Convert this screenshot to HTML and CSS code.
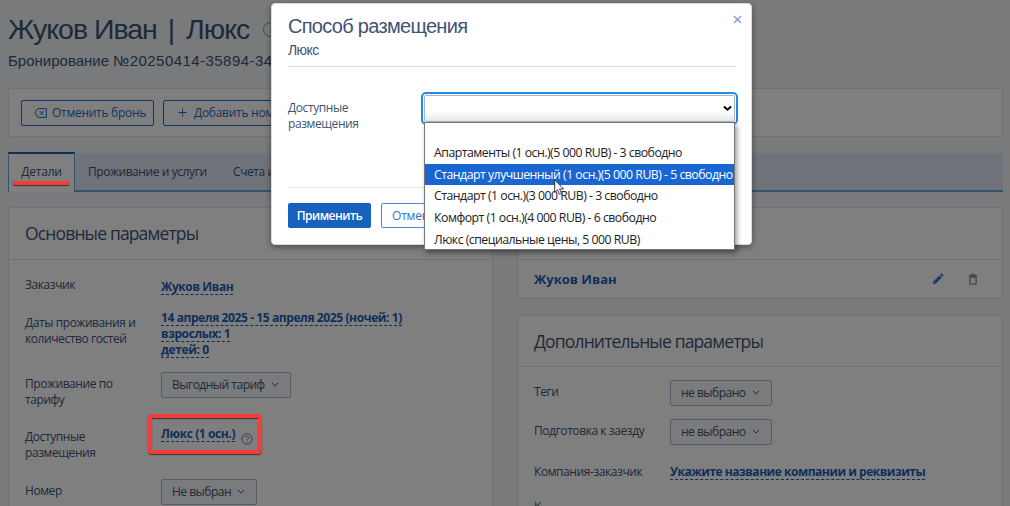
FILE: index.html
```html
<!DOCTYPE html>
<html lang="ru">
<head>
<meta charset="utf-8">
<title>Жуков Иван | Люкс</title>
<link rel="stylesheet" href="styles.css">
</head>
<body>
<main class="page">
  <header class="head">
    <h1 class="title"><span class="title-text">Жуков Иван <span class="pipe">|</span> Люкс</span><span class="status"></span></h1>
    <p class="booking">Бронирование <span class="number">№20250414-35894-34</span></p>
  </header>
  <section class="card toolbar">
    <button class="btn btn-cancel"><svg width="13" height="10" viewBox="0 0 13 10"><path d="M4 .6h8.4v8.8H4L.8 5zM5.7 3l4 4M9.7 3l-4 4"/></svg><span class="cancel-text">Отменить бронь</span></button>
    <button class="btn btn-add"><svg width="9" height="9" viewBox="0 0 9 9"><path d="M4.5.5v8M.5 4.5h8"/></svg><span class="add-text">Добавить ном</span></button>
  </section>
  <nav class="tabs">
    <a class="tab active">Детали</a>
    <a class="tab stay">Проживание и услуги</a>
    <a class="tab bills">Счета и</a>
  </nav>
  <div class="columns">
    <section class="card main-card">
      <h2 class="card-title">Основные параметры</h2>
      <div class="row r-customer"><div class="label">Заказчик</div><div class="value"><a class="edit">Жуков Иван</a></div></div>
      <div class="row r-dates"><div class="label">Даты проживания и количество гостей</div><div class="value"><a class="edit">14 апреля 2025 - 15 апреля 2025 (ночей: 1)</a><br><a class="edit">взрослых: 1</a><br><a class="edit">детей: 0</a></div></div>
      <div class="row r-rate"><div class="label">Проживание по<br>тарифу</div><div class="value"><span class="drop drop-rate">Выгодный тариф<svg width="8" height="6" viewBox="0 0 8 6"><path d="M1 1l3 3 3-3"/></svg></span></div></div>
      <div class="row r-place"><div class="label">Доступные<br>размещения</div><div class="value"><a class="edit">Люкс (1 осн.)</a><svg class="help" width="12" height="12" viewBox="0 0 12 12"><circle cx="6" cy="6" r="5.2"/><path d="M4.3 4.8c0-2.2 3.4-2.2 3.4 0C7.7 6 6 6 6 7.2M6 8.3v1"/></svg></div></div>
      <div class="row r-room"><div class="label">Номер</div><div class="value"><span class="drop drop-room">Не выбран<svg width="8" height="6" viewBox="0 0 8 6"><path d="M1 1l3 3 3-3"/></svg></span></div></div>
    </section>
    <div class="side">
      <section class="card guests">
        <h2 class="card-title"></h2>
        <div class="guest"><span class="guest-name">Жуков Иван</span>
          <svg class="pencil" width="12" height="12" viewBox="0 0 12 12"><path d="M1.1 10.9l.5-2.7 6-6 2.2 2.2-6 6zM8.2 1.6L9 .8q.5-.4 1 0l1.2 1.2q.4.5 0 1l-.8.8z" fill="#1b62c0"/><path d="M2.2 8.7l5.5-5.5M2.5 9.7l5.5-5.5" stroke="#80b0ec" stroke-width=".5"/></svg>
          <svg class="trash" width="10" height="11" viewBox="0 0 10 11"><path d="M.8 1.7h8.4M3.3 1V.6h3.4V1M1.9 3h6.2v7.2H1.9z"/></svg>
        </div>
      </section>
      <section class="card extra">
        <h2 class="card-title">Дополнительные параметры</h2>
        <div class="row r-tags"><div class="label">Теги</div><div class="value"><span class="drop">не выбрано<svg width="8" height="6" viewBox="0 0 8 6"><path d="M1 1l3 3 3-3"/></svg></span></div></div>
        <div class="row r-prep"><div class="label">Подготовка к заезду</div><div class="value"><span class="drop">не выбрано<svg width="8" height="6" viewBox="0 0 8 6"><path d="M1 1l3 3 3-3"/></svg></span></div></div>
        <div class="row r-company"><div class="label">Компания-заказчик</div><div class="value"><a class="edit">Укажите название компании и реквизиты</a></div></div>
        <div class="row r-contact"><div class="label">К</div></div>
      </section>
    </div>
  </div>
</main>
<div class="overlay"></div>
<div class="mark-line"></div>
<div class="mark-box"></div>
<div class="modal">
  <svg class="close" width="9" height="9" viewBox="0 0 9 9"><path d="M1 1l7 7M8 1L1 8"/></svg>
  <div class="modal-head"><h3 class="modal-title">Способ размещения</h3><p class="modal-sub">Люкс</p></div>
  <div class="modal-body"><div class="modal-label">Доступные размещения</div><div class="select"><svg width="9" height="7" viewBox="0 0 9 7"><path d="M1 1.4l3.5 3.3L8 1.4"/></svg></div></div>
  <div class="modal-foot"><button class="apply">Применить</button><button class="dismiss">Отмен</button></div>
</div>
<div class="menu">
  <div class="option"><span>Апартаменты (1 осн.)(5 000 RUB) - 3 свободно</span></div>
  <div class="option selected"><span>Стандарт улучшенный (1 осн.)(5 000 RUB) - 5 свободно</span></div>
  <div class="option"><span>Стандарт (1 осн.)(3 000 RUB) - 3 свободно</span></div>
  <div class="option"><span>Комфорт (1 осн.)(4 000 RUB) - 6 свободно</span></div>
  <div class="option"><span>Люкс (специальные цены, 5 000 RUB)</span></div>
</div>
<svg class="cursor" width="11" height="17" viewBox="0 0 11 17"><path d="M.7.8v12.6l2.8-2.6 2 4.6 2.1-.9-2-4.5h4z" fill="#fff" stroke="#223" stroke-width=".9"/></svg>
</body>
</html>
```
FILE: styles.css
```css
* { box-sizing: border-box; }
body { margin: 0; width: 1010px; height: 506px; overflow: hidden; position: relative; background: #f0f4f8; color: #3f5372; font: 12px/16px "Open Sans", "Noto Sans", sans-serif; letter-spacing: -.42px; }
h1, h2, h3, p { margin: 0; font-weight: 400; }
svg { fill: none; stroke: currentColor; flex: none; }
button { font: inherit; letter-spacing: inherit; padding: 0; margin: 0; }
.page { padding: 0 7px 0 8px; height: 506px; overflow: hidden; }
.head { height: 88px; padding-top: 10px; white-space: nowrap; }
.title { display: flex; align-items: center; height: 38px; font: 28.5px/38px "Liberation Sans", Arial, sans-serif; letter-spacing: -1px; }
.title-text { width: 255px; }
.pipe { padding: 0 5px 0 4px; }
.status { width: 40px; height: 15px; border: 1px solid #55b866; border-radius: 8px; }
.booking { font: 15px/20px "Liberation Sans", Arial, sans-serif; letter-spacing: 0; padding-top: 3px; }
.number { letter-spacing: .45px; }
.card { background: #fff; border: 1px solid #dce3ee; border-radius: 3px; }
.toolbar { height: 49px; padding: 11px 12px; display: flex; gap: 9px; }
.btn { height: 26px; display: flex; align-items: center; background: #fff; border: 1px solid #1f6fd0; border-radius: 2px; color: #1f6bc0; white-space: nowrap; letter-spacing: -.28px; padding-bottom: 1px; }
.btn-cancel { width: 133px; padding-left: 12px; gap: 5px; }
.btn-add { width: 140px; padding-left: 14px; gap: 7px; }
.tabs { display: flex; margin-top: 15px; height: 40px; background: linear-gradient(#e0e6f2, #e0e6f2) 0 1px / 100% 37px no-repeat; border-bottom: 2px solid #69a9dc; }
.tab { padding-top: 12px; white-space: nowrap; }
.active { width: 67px; height: 40px; background: #fff; border: 1px solid #69a9dc; border-top: 2px solid #1e5dac; border-bottom: 0; text-align: center; padding-top: 10px; letter-spacing: -.2px; }
.stay { padding-left: 13px; width: 158px; }
.columns { display: flex; gap: 24px; margin-top: 15px; }
.main-card { width: 485px; height: 310px; }
.side { flex: 1; }
.card-title { height: 52px; border-bottom: 1px solid #dce3ee; padding: 12px 16px 0; font-size: 17.5px; letter-spacing: -.85px; line-height: 26px; white-space: nowrap; }
.row { display: grid; grid-template-columns: 136px 1fr; padding-left: 16px; }
.label { max-width: 125px; }
.extra .label { max-width: 136px; white-space: nowrap; }
.edit { font-weight: 700; color: #1b5fb4; border-bottom: 1px dashed #1b5fb4; white-space: nowrap; line-height: 14px; display: inline-block; height: 15px; letter-spacing: -.4px; }
.extra .edit { letter-spacing: -.47px; }
.drop { display: flex; align-items: center; justify-content: space-between; width: 102px; height: 26px; padding: 0 11px 0 10px; border: 1px solid #aab7d2; border-radius: 2px; background: #f3f6fa; white-space: nowrap; letter-spacing: -.5px; }
.drop-rate { width: 130px; }
.drop-room { width: 96px; }
.r-customer { height: 50px; padding-top: 17px; }
.r-customer .value { padding-top: 2px; }
.r-dates { height: 62px; }
.r-dates .label { padding-top: 5px; }
.r-rate { height: 54px; }
.r-rate .label { padding-top: 4px; }
.r-place { height: 53px; padding-top: 1px; }
.r-place .label { padding-top: 2px; }
.r-place .value { display: flex; gap: 6px; }
.help { margin-top: 6px; color: #73809b; }
.r-room .label { padding-top: 4px; }
.guests { height: 92px; }
.guest { display: flex; align-items: center; height: 38px; padding: 0 24px 0 16px; color: #1b5fb4; }
.guest-name { font-weight: 700; flex: 1; font-size: 13px; letter-spacing: 0; }
.pencil { stroke: none; }
.trash { margin-left: 24px; color: #8993a9; stroke-width: 1.3; }
.extra { margin-top: 16px; height: 220px; }
.extra .card-title { height: 51px; }
.r-tags { height: 52px; padding-top: 13px; }
.r-tags .label { padding-top: 4px; }
.r-prep { height: 45px; }
.r-prep .label { padding-top: 4px; }
.r-company { height: 35px; }
.overlay { position: absolute; inset: 0; background: rgba(0,0,0,.5); }
.mark-line { position: absolute; left: 13px; top: 181px; width: 56px; height: 4px; border-radius: 2px; background: #f43c3b; box-shadow: 0 1px 1px #333; }
.mark-box { position: absolute; left: 148px; top: 414px; width: 114px; height: 40px; border: 4px solid #f43c3b; border-radius: 4px; box-shadow: 0 1px 1px #333, inset 0 1px 1px #333; }
.modal { position: absolute; left: 271px; top: 3px; width: 481px; height: 242px; padding: 0 16px; background: #fff; border: 1px solid #d6dbe4; border-radius: 4px; box-shadow: 0 2px 6px rgba(0,0,0,.4); overflow: hidden; }
.close { position: absolute; right: 9px; top: 11px; color: #8299c0; stroke-width: 1.3; }
.modal-head { height: 63px; border-bottom: 1px solid #d2deec; padding-top: 9px; }
.modal-title { font: 20px/26px "Liberation Sans", Arial, sans-serif; letter-spacing: -.7px; white-space: nowrap; }
.modal-sub { font: 14px/20px "Liberation Sans", Arial, sans-serif; letter-spacing: -.6px; padding-top: 1px; }
.modal-body { height: 121px; display: flex; padding-top: 28px; border-bottom: 1px solid #e3e8ef; }
.modal-label { width: 136px; padding: 5px 40px 0 0; }
.select { width: 311px; flex: none; height: 27px; border: 1px solid #a8b4d0; border-radius: 2px; outline: 2px solid #248bea; outline-offset: 1px; display: flex; align-items: center; justify-content: flex-end; padding-right: 2px; color: #000; background: linear-gradient(#fff 60%, #e8e8e8); }
.select svg { stroke-width: 2; }
.modal-foot { display: flex; gap: 10px; padding-top: 15px; }
.apply { width: 83px; height: 25px; border: 0; border-radius: 2px; background: #1662bd; color: #fff; font-weight: 600; letter-spacing: -.5px; }
.dismiss { width: 82px; height: 25px; border: 1px solid #4c8ad6; border-radius: 2px; background: #fff; color: #2f73c8; text-align: left; padding-left: 10px; letter-spacing: -.2px; }
.menu { position: absolute; left: 424px; top: 122px; width: 311px; height: 128px; padding-top: 19px; background: #fff; border: 1px solid #777; box-shadow: 2px 3px 5px rgba(0,0,0,.4); color: #222; font-size: 12.3px; letter-spacing: -.51px; }
.option { height: 21.7px; line-height: 22px; padding-left: 9px; white-space: nowrap; }
.selected { background: #1966d2; color: #fff; }
.cursor { position: absolute; left: 554px; top: 179px; }
```
